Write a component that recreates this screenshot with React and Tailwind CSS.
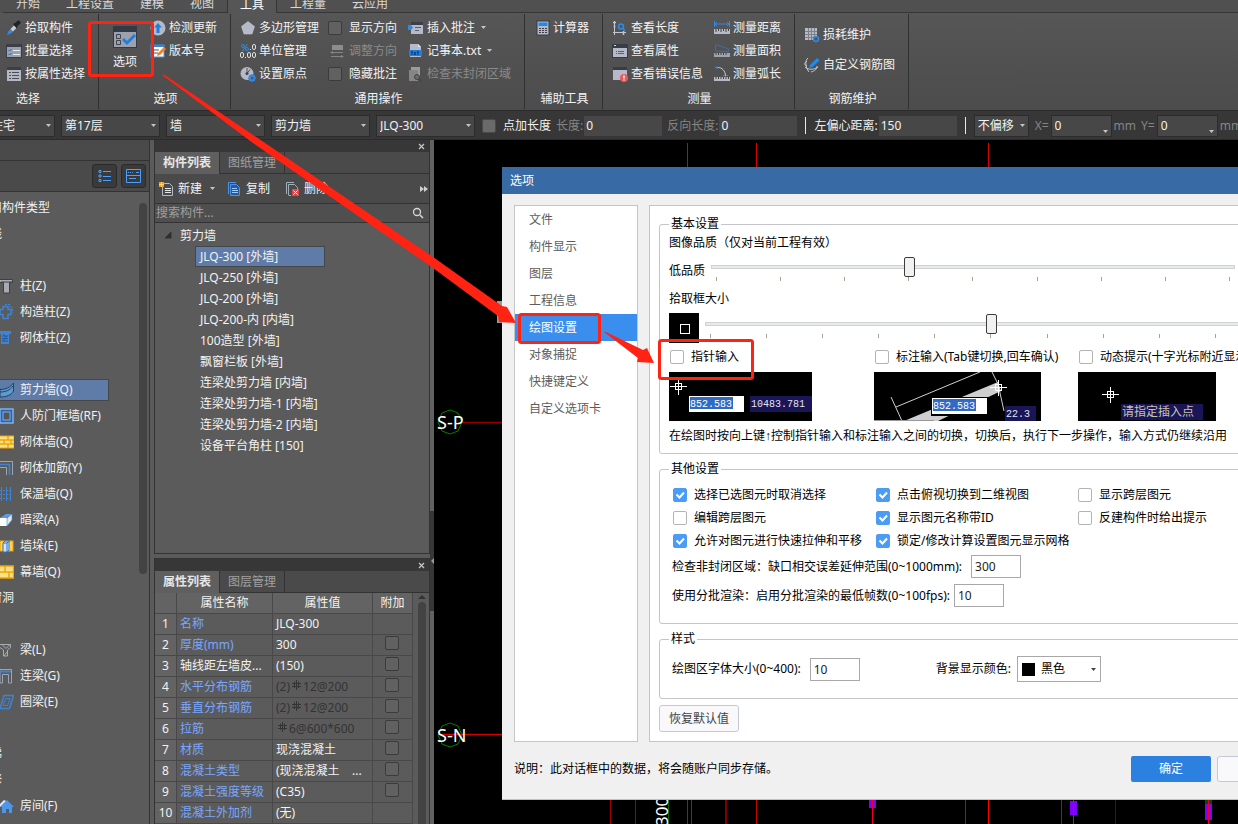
import React from "react";

const FONT = "font-['Noto_Sans','Noto_Sans_CJK_SC',sans-serif]";

function Svg({ w = 16, h = 16, children, className = "" }) {
  return (
    <svg width={w} height={h} viewBox={`0 0 ${w} ${h}`} fill="none" className={`block shrink-0 ${className}`} aria-hidden="true">
      {children}
    </svg>
  );
}

/* ---------- ribbon icons ---------- */
const icons = {
  pick: (
    <Svg>
      <path d="M1 15l1.500-4L8 6l2 2-5 5.500z" fill="#2e8ae6" />
      <path d="M4.500 9L8 5.500l2.500 2.500L7 11.500z" fill="#c9ccd1" />
      <path d="M7 4l2-1 3-2.500c2 0 3 1.500 2.500 3l-3 2.500-.5 2.500z" fill="#1f2329" />
    </Svg>
  ),
  batch: (
    <Svg>
      <rect x="0" y="1" width="16" height="14" fill="#3a3f4a" />
      <rect x="1" y="4" width="14" height="10" fill="#9aa0ac" />
      <path d="M2.500 7l1 1 2-2M2.500 11l1 1 2-2" stroke="#2166b8" />
      <path d="M7 7.500h7M7 11.500h7" stroke="#e6e9ee" />
    </Svg>
  ),
  attr: (
    <Svg>
      <rect x="1" y="1" width="14" height="14" fill="#b4b8c2" />
      <rect x="1" y="1" width="14" height="3" fill="#3a3f4a" />
      <path d="M3 6.500h2M6 6.500h7M3 9.500h2M6 9.500h7M3 12.500h2M6 12.500h7" stroke="#4a4f58" />
    </Svg>
  ),
  update: (
    <Svg>
      <circle cx="8" cy="8" r="7.500" fill="#b5b9c4" />
      <path d="M8 3l4 4.500H9.500V13h-3V7.500H4z" fill="#1f7fe0" />
    </Svg>
  ),
  version: (
    <Svg>
      <rect x="1" y="2" width="13" height="12" fill="#fff" stroke="#4d8fd8" />
      <path d="M1 3h13" stroke="#3b82d6" strokeWidth="2" />
      <path d="M4 7h5M4 10h4" stroke="#555" />
      <path d="M7 13l1-3 6-6 2 2-6 6z" fill="#f48024" />
    </Svg>
  ),
  polygon: (
    <Svg>
      <path d="M8 1.500L14.500 6.500 12 14H4L1.500 6.500z" fill="#b5b9c8" stroke="#d4d7df" strokeWidth=".5" />
    </Svg>
  ),
  origin: (
    <Svg>
      <circle cx="7" cy="7.500" r="6.500" fill="#b5b9c8" />
      <path d="M7 7.500V2M7 7.500l3-4" stroke="#555" />
      <circle cx="7" cy="7.500" r="1.500" fill="#444" />
      <circle cx="12" cy="12" r="2.500" stroke="#2e8ae6" strokeWidth="2" />
      <path d="M12 8v8M8 12h8M9.200 9.200l5.600 5.600M14.800 9.200l-5.600 5.600" stroke="#2e8ae6" />
      <circle cx="12" cy="12" r="1.300" fill="#555" />
    </Svg>
  ),
  adjust: (
    <Svg w={14}>
      <path d="M2 2h11v5H2z" fill="#8d8d8d" />
      <path d="M2 9.500h11M1 13.500h11" stroke="#858585" />
      <path d="M3 8v3L0 9.500zM11 12v3l3-1.500z" fill="#858585" />
    </Svg>
  ),
  insert: (
    <Svg>
      <rect x="3" y="2" width="12" height="12" fill="#b5b9c8" />
      <rect x="3" y="2" width="12" height="3" fill="#3a3f4a" />
      <path d="M7 7.500h6M7 10.500h4" stroke="#5b6070" />
      <path d="M0 5h3l2 2.500L3 10H0z" fill="#2e8ae6" />
    </Svg>
  ),
  note: (
    <Svg>
      <path d="M2 1h8l3 3v10H2z" fill="#b5b9c8" />
      <path d="M10 1v3h3z" fill="#e4e6ec" />
      <rect x="1" y="7" width="13" height="6" fill="#1f7fe0" />
      <path d="M3 9h2M4 8v4M6 9l2 3M8 9l-2 3M9 9h2M10 8v4" stroke="#0c3a70" />
    </Svg>
  ),
  unclosed: (
    <Svg>
      <path d="M3 1h9v10H3z" fill="#9b9b9b" />
      <path d="M1 4h9v11H1z" fill="#868686" />
      <circle cx="9" cy="11" r="2.500" fill="#6b6b6b" stroke="#444" />
      <path d="M11 13l2.500 2.500" stroke="#444" strokeWidth="1.500" />
    </Svg>
  ),
  calc: (
    <Svg w={14}>
      <rect x="1" y="1" width="12" height="14" fill="#b5b9c8" stroke="#353a44" />
      <rect x="2.500" y="2.500" width="9" height="3.500" fill="#1f8bf0" />
      <path d="M3 8.500h2M6 8.500h2M9 8.500h2M3 10.500h2M6 10.500h2M9 10.500h2M3 12.500h2M6 12.500h2M9 12.500h2" stroke="#3a3f4a" />
    </Svg>
  ),
  len: (
    <Svg>
      <path d="M2.500 1v14M1 12.500h13" stroke="#c3c6cf" />
      <path d="M1 2.500h3M2.500 5v3M11.500 11v4" stroke="#c3c6cf" strokeWidth="1.500" />
      <circle cx="9" cy="6.500" r="2.500" stroke="#2e8ae6" strokeWidth="1.500" />
      <path d="M11 8.500l2 2" stroke="#2e8ae6" strokeWidth="1.500" />
    </Svg>
  ),
  prop: (
    <Svg>
      <rect x="0" y="1" width="16" height="14" fill="#363c48" />
      <rect x="1" y="5" width="14" height="9" fill="#b5b9c8" />
      <path d="M2 2.500h2" stroke="#d5d8df" />
      <path d="M4 8.500h1M6 8.500h6M4 10.500h1M6 10.500h6" stroke="#1f6fc8" />
    </Svg>
  ),
  err: (
    <Svg>
      <rect x="1" y="1" width="14" height="13" fill="#b5b9c8" />
      <rect x="1" y="1" width="14" height="3" fill="#363c48" />
      <circle cx="12" cy="12" r="4" fill="#e85a5a" />
      <path d="M12 9.500v3M12 13.500v1" stroke="#fff" strokeWidth="1.400" />
    </Svg>
  ),
  mdist: (
    <Svg>
      <path d="M.5 1v6M15.500 1v6M1 4h14M3 2L1 4l2 2M13 2l2 2-2 2" stroke="#2e8ae6" />
      <rect x="0" y="9" width="16" height="5" fill="#b5b9c8" />
      <path d="M2 9v3M4.500 9v2M7 9v3M9.500 9v2M12 9v3M14.500 9v2" stroke="#444" />
    </Svg>
  ),
  marea: (
    <Svg>
      <path d="M1.500 8V2h2l11 4v2.500z" stroke="#3a6fae" />
      <rect x="0" y="10" width="16" height="4" fill="#9fa3b0" />
      <path d="M2 10v2M4.500 10v2M7 10v2M9.500 10v2M12 10v2" stroke="#444" />
    </Svg>
  ),
  marc: (
    <Svg>
      <path d="M1 1.500h4M3 0v3M9 9.500h5M11.500 7v4" stroke="#2e8ae6" />
      <path d="M4 1.500c4 0 7 3 7.500 8" stroke="#c3c6cf" />
      <rect x="0" y="11" width="16" height="4" fill="#b5b9c8" />
      <path d="M2 11v2M4.500 11v2M7 11v2M9.500 11v2M12 11v2M14.500 11v2" stroke="#444" />
    </Svg>
  ),
  loss: (
    <Svg>
      <rect x="1" y="1" width="12" height="12" fill="#b5b9c8" />
      <path d="M1 4.500h12M1 7.500h12M1 10.500h12M4.500 1v12M7.500 1v12M10.500 1v12" stroke="#7d818c" />
      <circle cx="12" cy="12" r="2.500" stroke="#2e8ae6" strokeWidth="1.500" fill="#545454" />
    </Svg>
  ),
  rebar: (
    <Svg>
      <path d="M4 1c-3 2-3 9 1 14M7 15c4-1 6-3 6-6M1 10c3 3 9 3 13 0M3 4c-3 2-3 4 0 5" stroke="#c3c6cf" />
      <path d="M5 11l1-3 7-7 2.500 2.500-7 6.500z" fill="#1f8bf0" />
    </Svg>
  ),
};

function UnitIcon() {
  return (
    <Svg>
      <circle cx="3" cy="3" r="1.500" stroke="#2e8ae6" />
      <circle cx="7" cy="6" r="1.500" stroke="#2e8ae6" />
      <path d="M7.500 1L2.500 8" stroke="#2e8ae6" />
      <path d="M10 6.500h1M5 14.500h1" stroke="#e0e0e0" />
      <rect x="12.500" y="1.500" width="3" height="5" rx="1.500" stroke="#e0e0e0" />
      <rect x=".5" y="9.500" width="3" height="5" rx="1.500" stroke="#e0e0e0" />
      <rect x="7.500" y="9.500" width="3" height="5" rx="1.500" stroke="#e0e0e0" />
      <rect x="12.500" y="9.500" width="3" height="5" rx="1.500" stroke="#e0e0e0" />
    </Svg>
  );
}

function Tri({ className = "" }) {
  return (
    <Svg w={5} h={3} className={className}>
      <path d="M0 0h5L2.500 3z" fill="#c4c4c4" />
    </Svg>
  );
}

function Cmd({ icon, text, menu, dim }) {
  return (
    <button type="button" className={`flex h-[23px] items-center gap-[3px] whitespace-nowrap ${dim ? "text-[#8b8b8b]" : "text-[#f2f2f2]"}`}>
      {icon}
      <span>{text}</span>
      {menu && <Tri className="ml-[3px]" />}
    </button>
  );
}

function Tick({ className = "" }) {
  return <input type="checkbox" aria-label="附加" className={`block h-[14px] w-[14px] shrink-0 appearance-none rounded-[2px] border border-[#3b3b3b] bg-[#616161] ${className}`} />;
}

function RibbonCheck({ text }) {
  return (
    <label className="flex h-[23px] items-center gap-[7px] whitespace-nowrap text-[#f2f2f2]">
      <input type="checkbox" className="block h-[14px] w-[14px] shrink-0 appearance-none rounded-[2px] border border-[#3b3b3b] bg-[#616161]" />
      {text}
    </label>
  );
}

function Group({ title, width, children }) {
  return (
    <section className={`flex h-full shrink-0 flex-col border-r border-[#303030] ${width}`}>
      <div className="flex h-[74px] shrink-0 pt-[2px]">{children}</div>
      <h2 className="shrink-0 pl-[2px] text-center leading-[22px] text-[#f2f2f2]">{title}</h2>
    </section>
  );
}

function Ribbon() {
  const tabs = ["开始", "工程设置", "建模", "视图", "工具", "工程量", "云应用"];
  return (
    <header className="shrink-0">
      <nav className="flex h-[13px] items-end overflow-hidden bg-[#505050] pl-[3px] text-[#d8d8d8]">
        {tabs.map((t) => (
          <button
            key={t}
            type="button"
            className={
              t === "工具"
                ? "h-[17px] shrink-0 border-x border-[#363636] bg-[#565656] px-[12px] leading-[16px] text-white"
                : "h-[17px] shrink-0 border-b border-[#363636] px-[13px] leading-[16px]"
            }
          >
            {t}
          </button>
        ))}
        <span className="h-[17px] flex-1 border-b border-[#363636]" />
      </nav>
      <div className="flex h-[97px] overflow-hidden bg-linear-to-b from-[#565656] to-[#4c4c4c] py-[1px]">
        <Group title="选择" width="w-[99px] [&>h2]:pr-[44px]">
          <div className="flex flex-col pl-[6px]">
            <Cmd icon={icons.pick} text="拾取构件" />
            <Cmd icon={icons.batch} text="批量选择" />
            <Cmd icon={icons.attr} text="按属性选择" />
          </div>
        </Group>
        <Group title="选项" width="w-[132px]">
          <button type="button" className="ml-[14px] flex w-[24px] flex-col items-center pt-[10px] text-[#f2f2f2]">
            <Svg w={24} h={22}>
              <rect width="24" height="22" fill="#343a45" />
              <rect x="1" y="6" width="22" height="15" fill="#9da1ad" />
              <path d="M3.500 8.500h4v4h-4zM3.500 14.500h4v4h-4z" stroke="#3f444f" />
              <path d="M10 13l4 4 8-8" stroke="#1f7fe0" strokeWidth="3" />
            </Svg>
            <span className="leading-[28px]">选项</span>
          </button>
          <div className="ml-[13px] flex flex-col">
            <Cmd icon={icons.update} text="检测更新" />
            <Cmd icon={icons.version} text="版本号" />
          </div>
        </Group>
        <Group title="通用操作" width="w-[294px]">
          <div className="ml-[9px] flex w-[88px] flex-col">
            <Cmd icon={icons.polygon} text="多边形管理" />
            <Cmd icon={<UnitIcon />} text="单位管理" />
            <Cmd icon={icons.origin} text="设置原点" />
          </div>
          <div className="flex w-[80px] flex-col">
            <RibbonCheck text="显示方向" />
            <button type="button" className="flex h-[23px] items-center gap-[5px] pl-[2px] text-[#8b8b8b]">
              {icons.adjust}
              调整方向
            </button>
            <RibbonCheck text="隐藏批注" />
          </div>
          <div className="flex flex-col">
            <Cmd icon={icons.insert} text="插入批注" menu />
            <Cmd icon={icons.note} text="记事本.txt" menu />
            <Cmd icon={icons.unclosed} text="检查未封闭区域" dim />
          </div>
        </Group>
        <Group title="辅助工具" width="w-[78px]">
          <div className="ml-[11px] flex flex-col">
            <Cmd icon={icons.calc} text="计算器" />
          </div>
        </Group>
        <Group title="测量" width="w-[192px]">
          <div className="ml-[9px] flex w-[102px] flex-col">
            <Cmd icon={icons.len} text="查看长度" />
            <Cmd icon={icons.prop} text="查看属性" />
            <Cmd icon={icons.err} text="查看错误信息" />
          </div>
          <div className="flex flex-col">
            <Cmd icon={icons.mdist} text="测量距离" />
            <Cmd icon={icons.marea} text="测量面积" />
            <Cmd icon={icons.marc} text="测量弧长" />
          </div>
        </Group>
        <Group title="钢筋维护" width="w-[114px]">
          <div className="ml-[9px] flex flex-col gap-[7px] pt-[7px]">
            <Cmd icon={icons.loss} text="损耗维护" />
            <Cmd icon={icons.rebar} text="自定义钢筋图" />
          </div>
        </Group>
      </div>
    </header>
  );
}

function Combo({ label, value, width, low }) {
  return (
    <div className={`relative h-[22px] shrink-0 ${width}`}>
      <select aria-label={label} className="h-full w-full appearance-none border border-[#2c2c2c] bg-[#474747] pl-[3px] text-[#f2f2f2]">
        <option>{value}</option>
      </select>
      <Tri className={low ? "absolute bottom-[4px] right-[4px]" : "absolute right-[4px] top-[9px]"} />
    </div>
  );
}

function BarField({ label, value, dim }) {
  return (
    <label className={`flex shrink-0 items-center gap-px whitespace-nowrap ${dim ? "text-[#858585]" : "text-[#f2f2f2]"}`}>
      {label}
      <input type="text" defaultValue={value} className="h-[20px] w-[78px] bg-[#474747] px-[2px] text-[#f2f2f2]" />
    </label>
  );
}

function OptionsBar() {
  return (
    <div className="flex h-[30px] shrink-0 items-center overflow-hidden border-y border-[#2b2b2b] bg-[#373737] pt-[1px]">
      <div className="-ml-[13px] flex gap-[6px]">
        <Combo label="单体" value="住宅" width="w-[68px]" />
        <Combo label="楼层" value="第17层" width="w-[99px]" />
        <Combo label="构件类别" value="墙" width="w-[99px]" />
        <Combo label="构件类型" value="剪力墙" width="w-[99px]" />
        <Combo label="构件" value="JLQ-300" width="w-[99px]" />
      </div>
      <label className="ml-[7px] flex shrink-0 items-center gap-[7px] whitespace-nowrap text-[#f2f2f2]">
        <input type="checkbox" className="block h-[14px] w-[14px] shrink-0 appearance-none rounded-[2px] border border-[#4a4a4a] bg-[#6a6a6a]" />
        点加长度
      </label>
      <div className="ml-[5px] flex shrink-0 gap-[5px]">
        <BarField label="长度:" value="0" dim />
        <BarField label="反向长度:" value="0" dim />
      </div>
      <span className="mx-[8px] h-[17px] w-px shrink-0 bg-[#e8e8e8]" />
      <BarField label="左偏心距离:" value="150" />
      <span className="mx-[8px] h-[17px] w-px shrink-0 bg-[#e8e8e8]" />
      <Combo label="偏移方式" value="不偏移" width="w-[55px]" />
      <div className="ml-[6px] flex shrink-0 items-center gap-[2px] text-[#858585]">
        X=
        <Combo label="X 偏移" value="0" width="w-[61px]" low />
        mm
      </div>
      <div className="ml-[5px] flex shrink-0 items-center gap-[2px] text-[#858585]">
        Y=
        <Combo label="Y 偏移" value="0" width="w-[61px]" low />
        mm
      </div>
    </div>
  );
}

/* ---------- component type list ---------- */
const typeIcons = {
  col: (
    <Svg w={14}>
      <path d="M0 1.500h12.500v3H9.500V15h-6V4.500H0" fill="#a9abb3" stroke="#3c3f46" />
      <path d="M1 4h11" stroke="#3c3f46" />
    </Svg>
  ),
  tie: (
    <Svg w={14}>
      <path d="M3 2.500h5v3h3v5H8v4H3v-4H0v-5h3z" stroke="#3f83d4" strokeWidth="1.500" />
      <path d="M5 .500h5v3h2.500v5" stroke="#3f83d4" strokeDasharray="2 1" />
    </Svg>
  ),
  brickcol: (
    <Svg w={14}>
      <path d="M0 1h11v3H9v10H1V4H0z" fill="#3f83d4" />
      <path d="M2 6h6M2 8.500h6M2 11h6M4 4v2M6 6v2.500M4 8.500V11" stroke="#24589b" />
    </Svg>
  ),
  shear: (
    <Svg w={14}>
      <path d="M0 7.500c6 0 10-2 13.500-6.500v8c-2 4-7 6-13.500 6z" fill="#5d9ad2" stroke="#22405f" />
      <path d="M0 10c6 0 10-2 13-6" stroke="#22405f" />
    </Svg>
  ),
  door: (
    <Svg w={14}>
      <rect x="0" y="1" width="13" height="14" fill="#2f62a8" stroke="#7fb1ee" strokeWidth="1.500" />
      <rect x="3" y="4" width="7" height="8" fill="#555" stroke="#7fb1ee" />
    </Svg>
  ),
  brick: (
    <Svg w={14}>
      <rect x="-1" y="2" width="15" height="12" fill="#ffe08a" stroke="#f0a500" />
      <path d="M0 6h14M0 10h14M8 2v4M4 6v4M11 6v4M8 10v4" stroke="#f0a500" strokeWidth="1.500" />
    </Svg>
  ),
  ribs: (
    <Svg w={14}>
      <path d="M0 1.500h12.500V15" stroke="#9aa6b5" />
      <path d="M0 4.500h9.500V15" stroke="#3f83d4" strokeWidth="1.500" />
      <path d="M0 7.500h6.500V15" stroke="#9aa6b5" />
    </Svg>
  ),
  insul: (
    <Svg w={14}>
      <path d="M1.500 1v14M6.500 1v14M10.500 1v14" stroke="#3f83d4" />
      <path d="M0 4.500h12M0 8.500h12M0 12.500h12" stroke="#3f83d4" strokeDasharray="2 1" />
    </Svg>
  ),
  beamA: (
    <Svg w={14}>
      <path d="M0 6l6-4h6l-6 4z" fill="#5c9be6" />
      <path d="M0 6h7v8H0z" fill="#fff" />
      <path d="M7 6l5-4v6l-5 6z" fill="#dce8f6" stroke="#3f83d4" strokeWidth=".6" />
    </Svg>
  ),
  pier: (
    <Svg w={14}>
      <rect x="0" y="3" width="13" height="10" fill="#ffd257" stroke="#f0a500" />
      <path d="M3 5l2-2h4v9l-2 2H3z" fill="#cfe3fb" stroke="#2f73c4" />
      <path d="M3 5h4v9M7 5l2-2" stroke="#2f73c4" />
    </Svg>
  ),
  curtain: (
    <Svg w={14}>
      <rect x="-1" y="2" width="14.500" height="12" fill="#ffe08a" stroke="#f0a500" strokeWidth="1.500" />
      <path d="M0 8h14M5 2v6M9 8v6" stroke="#f0a500" strokeWidth="1.500" />
    </Svg>
  ),
  beam: (
    <Svg w={14}>
      <path d="M0 2.500h10.500v3L7.500 8v6h-4V8L0 5.500" stroke="#a9abb3" />
      <path d="M2 2.500l4 4 4-4M4 14l3-4" stroke="#a9abb3" />
    </Svg>
  ),
  link: (
    <Svg w={14}>
      <path d="M0 1.500h11.500V15H8.500V6.500h-6V15H0z" stroke="#9aa6b5" />
      <path d="M0 3.500h11" stroke="#3f83d4" strokeWidth="2" />
    </Svg>
  ),
  ring: (
    <Svg w={14}>
      <path d="M4 1.500h9.500l-4 13H0z" stroke="#3f83d4" strokeWidth="1.500" />
      <path d="M6 4.500h4l-2.500 7H3z" stroke="#3f83d4" />
    </Svg>
  ),
  room: (
    <Svg w={14}>
      <path d="M0 9l7-7 7 7h-2v6H9v-4H6v4H2V9z" fill="#4b96ee" />
      <path d="M0 6l4-4 2 1-6 6z" fill="#dbe9fa" />
    </Svg>
  ),
};

const types = [
  { head: "常用构件类型" },
  { head: "轴线" },
  { head: "柱" },
  { icon: "col", text: "柱(Z)" },
  { icon: "tie", text: "构造柱(Z)" },
  { icon: "brickcol", text: "砌体柱(Z)" },
  { head: "墙" },
  { icon: "shear", text: "剪力墙(Q)", on: true },
  { icon: "door", text: "人防门框墙(RF)" },
  { icon: "brick", text: "砌体墙(Q)" },
  { icon: "ribs", text: "砌体加筋(Y)" },
  { icon: "insul", text: "保温墙(Q)" },
  { icon: "beamA", text: "暗梁(A)" },
  { icon: "pier", text: "墙垛(E)" },
  { icon: "curtain", text: "幕墙(Q)" },
  { head: "门窗洞" },
  { head: "梁" },
  { icon: "beam", text: "梁(L)" },
  { icon: "link", text: "连梁(G)" },
  { icon: "ring", text: "圈梁(E)" },
  { head: "板" },
  { head: "楼梯" },
  { head: "装修" },
  { icon: "room", text: "房间(F)" },
];

function TypePanel() {
  return (
    <aside className="flex w-[150px] shrink-0 flex-col overflow-hidden border-r border-[#333] bg-[#5b5b5b] text-[#f2f2f2]">
      <div className="h-[21px] shrink-0 border-b border-[#333] bg-[#4a4a4a]" />
      <div className="flex h-[31px] shrink-0 items-center justify-end gap-[4px] border-b border-[#333] bg-[#4a4a4a] pr-[3px]">
        <button type="button" aria-label="列表视图" className="flex h-[24px] w-[25px] items-center justify-center rounded-[3px] border border-[#2a2a2a] bg-[#3a3a3a]">
          <Svg w={14} h={14}>
            <path d="M1 1.500h2v2H1zM1 6h2v2H1zM1 10.500h2v2H1z" stroke="#4ea0ff" />
            <path d="M5 2.500h8M5 7.500h8M5 11.500h8" stroke="#4ea0ff" />
          </Svg>
        </button>
        <button type="button" aria-label="面板视图" className="flex h-[24px] w-[25px] items-center justify-center rounded-[3px] border border-[#2a2a2a] bg-[#3a3a3a]">
          <Svg w={15} h={14}>
            <path d="M.5.500h14v13H.5zM.5 6.500h14" stroke="#4ea0ff" />
            <path d="M2 3.500h1M4 3.500h1M6 3.500h1M10 3.500h3M3 9.500h7" stroke="#4ea0ff" />
          </Svg>
        </button>
      </div>
      <div className="flex min-h-0 flex-1 overflow-hidden pt-[3px]">
        <ul className="min-w-0 flex-1">
          {types.map((t) =>
            t.head ? (
              <li key={t.head} className="-ml-[22px] h-[26px] whitespace-nowrap leading-[26px]">
                {t.head}
              </li>
            ) : (
              <li key={t.text} className="h-[26px] py-[2px]">
                <button
                  type="button"
                  className={`flex h-[22px] w-[109px] items-center gap-[6px] whitespace-nowrap border ${
                    t.on ? "border-l-0 border-[#45474b] bg-[#5f7ba8]" : "border-l-0 border-transparent"
                  }`}
                >
                  {typeIcons[t.icon]}
                  {t.text}
                </button>
              </li>
            )
          )}
        </ul>
        <div className="mr-[2px] mt-[8px] h-[371px] w-[8px] shrink-0 rounded-full bg-[#434343]" />
      </div>
    </aside>
  );
}

function PanelHead({ tabs }) {
  return (
    <>
      <div className="flex h-[12px] shrink-0 items-center justify-end bg-[#373737] pr-[4px]">
        <button type="button" aria-label="关闭">
          <Svg w={7} h={7}>
            <path d="M1 1l5 5M6 1L1 6" stroke="#c4c4c4" strokeWidth="1.300" />
          </Svg>
        </button>
      </div>
      <div className="flex h-[22px] shrink-0 bg-[#4a4a4a]">
        <button type="button" className="w-[65px] border-r border-[#333] bg-[#5f5f5f] font-bold leading-[20px] text-[#e6e6e6]">
          {tabs[0]}
        </button>
        <button type="button" className="w-[65px] border-b border-r border-[#333] leading-[20px] text-[#a0a0a0]">
          {tabs[1]}
        </button>
        <span className="flex-1 border-b border-[#333]" />
      </div>
    </>
  );
}

const members = [
  "JLQ-300 [外墙]",
  "JLQ-250 [外墙]",
  "JLQ-200 [外墙]",
  "JLQ-200-内 [内墙]",
  "100造型 [外墙]",
  "飘窗栏板 [外墙]",
  "连梁处剪力墙 [内墙]",
  "连梁处剪力墙-1 [内墙]",
  "连梁处剪力墙-2 [内墙]",
  "设备平台角柱 [150]",
];

function MemberPanel() {
  return (
    <section className="flex h-[414px] shrink-0 flex-col border border-t-0 border-[#333] bg-[#5b5b5b] text-[#f2f2f2]">
      <PanelHead tabs={["构件列表", "图纸管理"]} />
      <div className="flex h-[30px] shrink-0 items-center border-b border-[#333] bg-[#4a4a4a] pl-[4px] pr-px">
        <button type="button" className="flex items-center gap-[5px] pr-[12px]">
          <Svg w={14}>
            <path d="M3.500 2.500h7l3 3v9h-10z" fill="#4a4a4a" stroke="#aebdc6" />
            <path d="M6 7.500h6M6 9.500h6M6 11.500h6" stroke="#e6e6e6" />
            <path d="M0 1h5v5H0z" fill="#ffd76a" />
            <path d="M0 1h2v2H0zM3 1h2v2H3zM0 4h2v2H0zM3 4h2v2H3z" fill="#f39c1f" />
          </Svg>
          新建
          <Tri className="ml-[3px]" />
        </button>
        <button type="button" className="flex items-center gap-[5px] pr-[15px]">
          <Svg w={14}>
            <path d="M1.500 13V1.500H9" stroke="#4b93e6" />
            <path d="M3.500 3.500h6l3 3v8h-9z" fill="#2b5b96" stroke="#4b93e6" />
            <path d="M5 7.500h5M5 9.500h6M5 11.500h6" stroke="#9cc7ff" />
          </Svg>
          复制
        </button>
        <button type="button" className="flex items-center gap-[5px]">
          <Svg w={14}>
            <path d="M1.500 13V1.500H9M3.500 14V3.500h6l3 3V8M3.500 14.500H6" stroke="#9fb0bb" />
            <rect x="7" y="8" width="7" height="7" fill="#d9484c" />
            <path d="M8.500 9.500l4 4M12.500 9.500l-4 4" stroke="#fff" />
          </Svg>
          删除
        </button>
        <button type="button" aria-label="更多" className="ml-auto">
          <Svg w={8} h={6}>
            <path d="M0 0l4 3-4 3zM4 0l4 3-4 3z" fill="#d0d0d0" />
          </Svg>
        </button>
      </div>
      <div className="flex h-[19px] shrink-0 items-center border-b border-[#333] bg-[#4f4f4f] pl-px pr-[5px]">
        <input type="text" aria-label="搜索构件" placeholder="搜索构件..." className="min-w-0 flex-1 bg-transparent placeholder:text-[#a0a0a0]" />
        <Svg w={12} h={12}>
          <circle cx="5" cy="5" r="3.500" stroke="#d8d8d8" strokeWidth="1.300" />
          <path d="M8 8l3 3" stroke="#d8d8d8" strokeWidth="1.500" />
        </Svg>
      </div>
      <div className="pt-[2px]">
        <div className="flex h-[21px] items-center gap-[8px] pl-[10px]">
          <Svg w={7} h={7}>
            <path d="M6 0v6H0z" fill="#2e2e2e" stroke="#333" />
          </Svg>
          剪力墙
        </div>
        <ul className="pl-[40px]">
          {members.map((m, i) => (
            <li
              key={m}
              className={`h-[21px] w-[130px] whitespace-nowrap border pl-[4px] leading-[19px] ${
                i === 0 ? "border-[#45474b] bg-[#5f7ba8]" : "border-transparent"
              }`}
            >
              {m}
            </li>
          ))}
        </ul>
      </div>
    </section>
  );
}

function Rebar() {
  return (
    <Svg w={9} h={10} className="mx-[2px] mb-[4px]">
      <path d="M0 3.500h9M0 6.500h9M4.500 0v10M2.500 1.500v6.500M6.500 1.500v6.500" stroke="#343434" />
    </Svg>
  );
}

const props = [
  ["名称", "JLQ-300", { noBox: true }],
  ["厚度(mm)", "300", {}],
  ["轴线距左墙皮...", "(150)", { plain: true }],
  ["水平分布钢筋", ["(2)", "12@200"], {}],
  ["垂直分布钢筋", ["(2)", "12@200"], {}],
  ["拉筋", ["", "6@600*600"], {}],
  ["材质", "现浇混凝土", {}],
  ["混凝土类型", "(现浇混凝土    ...", {}],
  ["混凝土强度等级", "(C35)", {}],
  ["混凝土外加剂", "(无)", { noBox: true }],
];

function PropPanel() {
  const cell = "h-[21px] border-b border-r border-[#484848] p-0";
  return (
    <section className="mt-[4px] flex min-h-0 flex-1 flex-col overflow-hidden border-x border-t border-[#333] bg-[#5b5b5b] text-[#f2f2f2]">
      <PanelHead tabs={["属性列表", "图层管理"]} />
      <div className="flex min-h-0 flex-1 overflow-hidden">
        <table className="h-fit w-[258px] shrink-0 table-fixed border-separate border-spacing-0">
          <colgroup>
            <col className="w-[22px]" />
            <col className="w-[96px]" />
            <col className="w-[100px]" />
            <col className="w-[40px]" />
          </colgroup>
          <thead className="bg-[#636363]">
            <tr>
              {["", "属性名称", "属性值", "附加"].map((h, i) => (
                <th key={i} className={`${cell} text-center font-normal leading-[20px]`}>
                  {h}
                </th>
              ))}
            </tr>
          </thead>
          <tbody>
            {props.map(([name, value, o], i) => (
              <tr key={name}>
                <td className={`${cell} bg-[#636363] text-center leading-[20px]`}>{i + 1}</td>
                <td className={`${cell} whitespace-nowrap pl-[3px] leading-[20px] ${o.plain ? "" : "text-[#79a7ff]"}`}>{name}</td>
                <td className={`${cell} whitespace-pre pl-[3px] leading-[20px]`}>
                  {Array.isArray(value) ? (
                    <span className="flex items-center text-[#343434]">
                      {value[0]}
                      <Rebar />
                      {value[1]}
                    </span>
                  ) : (
                    value
                  )}
                </td>
                <td className={cell}>
                  {!o.noBox && (
                    <div className="flex justify-center pb-[4px] pr-px">
                      <Tick />
                    </div>
                  )}
                </td>
              </tr>
            ))}
          </tbody>
        </table>
        <div className="ml-[5px] mt-[2px] flex w-[8px] flex-col items-center gap-[3px]">
          <Svg w={8} h={4}>
            <path d="M0 4l4-4 4 4z" fill="#333" />
          </Svg>
          <span className="w-full flex-1 rounded-t-full bg-[#434343]" />
        </div>
      </div>
    </section>
  );
}

/* ---------- drawing area behind the dialog ---------- */
function Drawing() {
  return (
    <svg className="absolute left-0 top-0 block" width="804" height="684" viewBox="434 140 804 684" fill="none" aria-hidden="true">
      <path d="M687.500 143v30M756.500 143v30M988.500 143v30" stroke="#d80000" />
      <path d="M462 422.500h60" stroke="#900000" strokeWidth="1.500" />
      <path d="M438 734.500h84" stroke="#d00000" strokeWidth="1.500" />
      <path d="M450 410l8 3 4 9-4 9-8 3-8-3-4-9 4-9z" stroke="#008000" />
      <path d="M450 723l8 3 4 9-4 9-8 3-8-3-4-9 4-9z" stroke="#008000" />
      <text x="437" y="429" fontSize="18" fill="#fff" fontFamily="Noto Sans, sans-serif">S-P</text>
      <text x="437" y="742" fontSize="18" fill="#fff" fontFamily="Noto Sans, sans-serif">S-N</text>
      <rect x="497" y="301" width="6" height="22" fill="#9a9a9a" />
      <path d="M610.500 790v34M635.500 790v34" stroke="#a00000" />
      <path d="M668.500 790v34M691.500 790v34" stroke="#006400" />
      <path d="M687.500 790v34M756.500 790v34M872.500 790v34M965.500 790v34M1061.500 790v34" stroke="#c80000" />
      <path d="M726 790v34" stroke="#800000" strokeWidth="2" />
      <path d="M988.500 790v34" stroke="#f00" />
      <path d="M1115.500 790v34" stroke="#700000" />
      <path d="M869 800h7v8h-7zM1070 801h7v14h-7zM1205 804h7v16h-7z" fill="#8000ff" />
      <path d="M1205 800h7v4h-7z" fill="#005000" />
      <path d="M872.500 800v24M1073.500 800v24M1208.500 800v24" stroke="#f00020" />
      <text transform="translate(668 826) rotate(-90)" fontSize="17" fill="#fff" fontFamily="Noto Sans, sans-serif">300</text>
    </svg>
  );
}

/* ---------- dialog ---------- */
function Check({ text, checked }) {
  return (
    <label className="flex items-center gap-[7px] whitespace-nowrap">
      <span className="relative block h-[14px] w-[14px] shrink-0">
        <input
          type="checkbox"
          defaultChecked={checked}
          className="peer block h-[14px] w-[14px] appearance-none rounded-[2px] border border-[#b4b4b4] bg-white checked:border-[#4a9cf5] checked:bg-[#4a9cf5]"
        />
        <svg viewBox="0 0 14 14" className="pointer-events-none absolute inset-0 hidden peer-checked:block" fill="none" aria-hidden="true">
          <path d="M3.500 6.500l3 3 4.500-5" stroke="#fff" strokeWidth="2" />
        </svg>
      </span>
      {text}
    </label>
  );
}

function Slider({ label, max, value, className = "" }) {
  return (
    <div className={`min-w-0 flex-1 ${className}`}>
      <input
        type="range"
        aria-label={label}
        min="0"
        max={max}
        defaultValue={value}
        className="block h-[20px] w-full appearance-none bg-transparent [&::-webkit-slider-runnable-track]:h-[4px] [&::-webkit-slider-runnable-track]:border [&::-webkit-slider-runnable-track]:border-[#d0d2d2] [&::-webkit-slider-runnable-track]:bg-[#e7eaea] [&::-webkit-slider-thumb]:-mt-[9px] [&::-webkit-slider-thumb]:h-[20px] [&::-webkit-slider-thumb]:w-[11px] [&::-webkit-slider-thumb]:appearance-none [&::-webkit-slider-thumb]:rounded-[2px] [&::-webkit-slider-thumb]:border [&::-webkit-slider-thumb]:border-[#3c3c3c] [&::-webkit-slider-thumb]:bg-[#f1f1f1]"
      />
      <div className="flex justify-between px-[5px]">
        {Array.from({ length: max + 1 }, (_, i) => (
          <span key={i} className="h-[4px] w-px bg-[#a3a390]" />
        ))}
      </div>
    </div>
  );
}

function Cross({ x, y }) {
  return (
    <g transform={`translate(${x} ${y})`} stroke="#fff">
      <path d="M-8 .5h17M.5-7v16" />
      <rect x="-2.500" y="-2.500" width="6" height="6" />
    </g>
  );
}

const MONO = "Liberation Mono, monospace";

function PointerPreview() {
  return (
    <svg width="143" height="49" viewBox="0 0 143 49" fill="none" className="block">
      <rect width="143" height="49" fill="#000" />
      <Cross x={9} y={14} />
      <rect x="20" y="24" width="55" height="16" fill="#fff" />
      <rect x="21" y="25" width="43" height="12" fill="#316ac5" />
      <rect x="81" y="24" width="62" height="16" fill="#191556" />
      <text x="21" y="35" fontSize="10" fill="#fff" fontFamily={MONO}>852.583</text>
      <text x="82" y="35" fontSize="10" fill="#e4e4f0" fontFamily={MONO}>10483.781</text>
    </svg>
  );
}

function DimPreview() {
  return (
    <svg width="167" height="49" viewBox="0 0 167 49" fill="none" className="block">
      <rect width="167" height="49" fill="#000" />
      <path d="M17 25l11 24M22 35L106 0M118 0l6 12 6 27" stroke="#cfcfcf" />
      <path d="M30 49L124 10l3 9L64 49z" fill="#cfcfcf" />
      <path d="M0 48.500h60" stroke="#999" />
      <rect x="57" y="25" width="57" height="19" fill="#000" />
      <rect x="58" y="26" width="55" height="16" fill="#fff" />
      <rect x="59" y="27" width="43" height="12" fill="#316ac5" />
      <rect x="131" y="34" width="31" height="15" fill="#191556" />
      <text x="59" y="37" fontSize="10" fill="#fff" fontFamily={MONO}>852.583</text>
      <text x="132" y="45" fontSize="10" fill="#e4e4f0" fontFamily={MONO}>22.3</text>
      <Cross x={124} y={15} />
    </svg>
  );
}

function TipPreview() {
  return (
    <svg width="138" height="49" viewBox="0 0 138 49" fill="none" className="block">
      <rect width="138" height="49" fill="#000" />
      <Cross x={32} y={22} />
      <rect x="43" y="32" width="82" height="16" fill="#191556" />
      <text x="44" y="44" fontSize="12" fill="#c8c4b4" fontFamily="Noto Sans CJK SC, sans-serif">请指定插入点</text>
    </svg>
  );
}

function Field({ title, className, body }) {
  return (
    <fieldset className={`min-w-0 rounded-[3px] border border-[#c4c5ca] ${className}`}>
      <legend className="ml-[9px] px-[2px] leading-[16px]">{title}</legend>
      {body}
    </fieldset>
  );
}

const numBox = "h-[23px] w-[50px] border border-[#a8a8a8] bg-white px-[3px] text-[#222]";

function Dialog() {
  const nav = ["文件", "构件显示", "图层", "工程信息", "绘图设置", "对象捕捉", "快捷键定义", "自定义选项卡"];
  return (
    <div role="dialog" aria-label="选项" className="absolute left-[68px] top-[27px] flex w-[807px] flex-col border-b border-[#b9c3cc] bg-[#f0f0f0] text-black">
      <div className="h-[27px] bg-[#386aa6] pl-[8px] leading-[27px] text-white">选项</div>
      <div className="flex gap-[11px] px-[12px] pt-[11px]">
        <ul className="w-[124px] shrink-0 border border-[#c4c5ca] bg-white">
          {nav.map((n) => (
            <li key={n}>
              <button
                type="button"
                className={`block h-[27px] w-full pl-[14px] text-left ${n === "绘图设置" ? "bg-[#3a8eee] text-white" : "text-[#5c5c5c]"}`}
              >
                {n}
              </button>
            </li>
          ))}
        </ul>
        <div className="min-w-0 flex-1 border border-[#c4c5ca] bg-white px-[9px] pb-[9px] pt-[10px]">
          <Field
            title="基本设置"
            className=""
            body={
              <div className="pb-[2px] pl-[9px] pr-[9px]">
                <p className="leading-[22px]">图像品质（仅对当前工程有效）</p>
                <div className="flex h-[32px] gap-[6px] leading-[34px]">
                  <span>低品质</span>
                  <Slider label="图像品质" max={8} value={3} className="pt-[3px]" />
                  <span>高品质</span>
                </div>
                <p className="leading-[26px]">拾取框大小</p>
                <div className="flex h-[32px] gap-[6px] pt-px">
                  <Svg w={30} h={30}>
                    <rect width="30" height="30" fill="#000" />
                    <rect x="11.500" y="11.500" width="9" height="9" stroke="#fff" />
                  </Svg>
                  <Slider label="拾取框大小" max={10} value={5} className="pt-px" />
                </div>
                <div className="grid grid-cols-[205px_204px_1fr]">
                  <div>
                    <div className="flex h-[28px] pb-[2px] pl-px">
                      <Check text="指针输入" />
                    </div>
                    <PointerPreview />
                  </div>
                  <div>
                    <div className="flex h-[28px] pb-[2px] pl-px">
                      <Check text="标注输入(Tab键切换,回车确认)" />
                    </div>
                    <DimPreview />
                  </div>
                  <div>
                    <div className="flex h-[28px] pb-[2px] pl-px">
                      <Check text="动态提示(十字光标附近显示)" />
                    </div>
                    <TipPreview />
                  </div>
                </div>
                <p className="whitespace-nowrap leading-[30px]">
                  在绘图时按向上键<span className="font-['Liberation_Sans',sans-serif]">↑</span>
                  控制指针输入和标注输入之间的切换，切换后，执行下一步操作，输入方式仍继续沿用
                </p>
              </div>
            }
          />

          <Field
            title="其他设置"
            className="mt-[7px]"
            body={
              <div className="pb-[13px] pl-[12px] pt-[6px]">
                <div className="grid auto-rows-[23px] grid-cols-[203px_202px_1fr] pl-px">
                  <Check text="选择已选图元时取消选择" checked />
                  <Check text="点击俯视切换到二维视图" checked />
                  <Check text="显示跨层图元" />
                  <Check text="编辑跨层图元" />
                  <Check text="显示图元名称带ID" checked />
                  <Check text="反建构件时给出提示" />
                  <Check text="允许对图元进行快速拉伸和平移" checked />
                  <Check text="锁定/修改计算设置图元显示网格" checked />
                </div>
                <label className="flex h-[29px] items-center gap-[9px]">
                  检查非封闭区域：缺口相交误差延伸范围(0~1000mm):
                  <input type="text" defaultValue="300" className={numBox} />
                </label>
                <label className="flex h-[29px] items-center gap-[4px]">
                  使用分批渲染：启用分批渲染的最低帧数(0~100fps):
                  <input type="text" defaultValue="10" className={numBox} />
                </label>
              </div>
            }
          />

          <Field
            title="样式"
            className="mt-[7px]"
            body={
              <div className="flex items-center gap-[76px] pb-[14px] pl-[12px] pt-[7px]">
                <label className="flex h-[30px] items-center gap-[9px]">
                  绘图区字体大小(0~400):
                  <input type="text" defaultValue="10" className={numBox} />
                </label>
                <label className="flex h-[30px] items-center gap-[6px]">
                  背景显示颜色:
                  <span className="relative block h-[26px] w-[84px]">
                    <select className="h-full w-full appearance-none border border-[#a8a8a8] bg-white pl-[23px] text-black">
                      <option>黑色</option>
                    </select>
                    <span className="pointer-events-none absolute left-[5px] top-[7px] h-[13px] w-[13px] bg-black" />
                    <svg width="5" height="3" viewBox="0 0 5 3" className="pointer-events-none absolute right-[5px] top-[12px]" aria-hidden="true">
                      <path d="M0 0h5L2.500 3z" fill="#444" />
                    </svg>
                  </span>
                </label>
              </div>
            }
          />
          <button type="button" className="mt-[6px] block h-[27px] w-[80px] rounded-[3px] border border-[#c3c9d6] bg-[#f9f9fb] text-[#444]">
            恢复默认值
          </button>
        </div>
      </div>
      <div className="flex h-[57px] items-center gap-[6px] px-[12px] pb-[4px]">
        <p className="flex-1">说明：此对话框中的数据，将会随账户同步存储。</p>
        <button type="button" className="h-[26px] w-[80px] rounded-[2px] bg-[#2c80e0] text-white">
          确定
        </button>
        <button type="button" className="h-[26px] w-[80px] rounded-[3px] border border-[#c3c9d6] bg-[#f9f9fb] text-[#444]">
          取消
        </button>
      </div>
    </div>
  );
}

function Callouts() {
  return (
    <svg className="pointer-events-none absolute left-0 top-0 block" width="1238" height="824" viewBox="0 0 1238 824" fill="none" aria-hidden="true">
      <g stroke="#ff2314" strokeWidth="3">
        <rect x="89.500" y="22.500" width="63" height="53" rx="2" />
        <rect x="519.500" y="314.500" width="80" height="28" rx="2" />
        <rect x="659.500" y="340.500" width="93" height="38" rx="2" />
      </g>
      <path d="M162 75l2-.5L433 257l69 49 5 1 9 16-17-1-1-6-65-48L253 143z" fill="#ff2314" />
      <path d="M604 332h2l37 18 4-2 7 15-17-1 1-4z" fill="#ff2314" />
    </svg>
  );
}

export default function App() {
  return (
    <div className={`relative flex h-screen w-full flex-col overflow-hidden bg-[#5b5b5b] text-[12px] leading-[16px] ${FONT}`}>
      <Ribbon />
      <OptionsBar />
      <main className="flex min-h-0 flex-1 overflow-hidden">
        <TypePanel />
        <div className="ml-[4px] flex w-[276px] shrink-0 flex-col">
          <MemberPanel />
          <PropPanel />
        </div>
        <div className="flex w-[4px] shrink-0 flex-col bg-[#616161]">
          <div className="mt-[371px] flex h-[100px] items-center justify-end bg-[#373737]">
            <Svg w={3} h={6}>
              <path d="M3 0v6L0 3z" fill="#9a9a9a" />
            </Svg>
          </div>
        </div>
        <div className="relative min-w-0 flex-1 overflow-hidden bg-black">
          <Drawing />
          <Dialog />
        </div>
      </main>
      <Callouts />
    </div>
  );
}
